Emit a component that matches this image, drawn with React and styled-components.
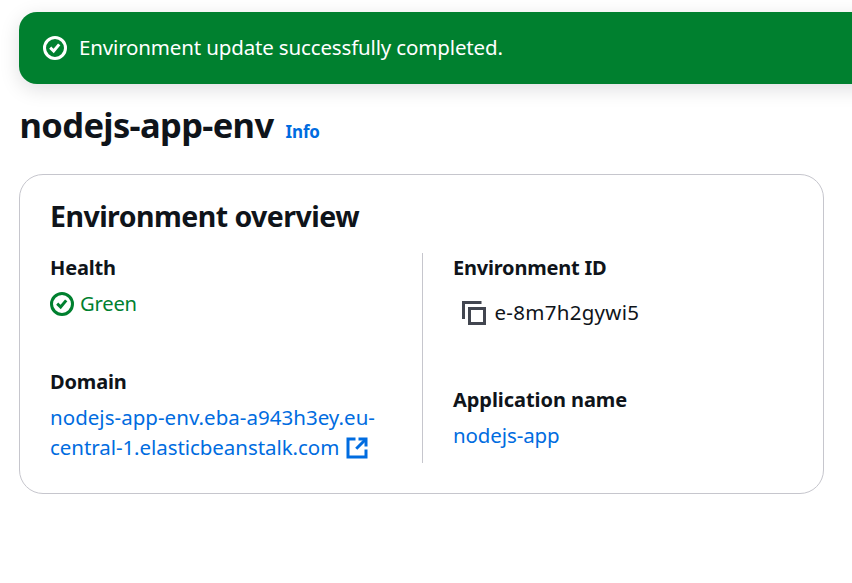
import React from "react";
import styled, { createGlobalStyle } from "styled-components";

const GlobalStyle = createGlobalStyle`
  body {
    margin: 0;
    background: #ffffff;
    color: #0f141a;
    font-family: "Noto Sans", "Open Sans", sans-serif;
    font-size: 20.5px;
    line-height: 30px;
  }
`;

const Page = styled.main`
  box-sizing: border-box;
  height: 583px;
  padding: 12px 0 0 19px;
  overflow: hidden;
`;

const Flash = styled.div`
  box-sizing: border-box;
  display: flex;
  align-items: center;
  gap: 12px;
  width: 900px;
  height: 72px;
  padding: 0 24px;
  border-radius: 18px;
  background: #00802f;
  color: #ffffff;
  box-shadow: 0 5px 20px rgba(0, 7, 22, 0.13);
`;

const FlashText = styled.span`
  padding-bottom: 2px;
  letter-spacing: -0.15px;
`;

const Header = styled.header`
  display: flex;
  align-items: baseline;
  gap: 12px;
  margin: 18px 0 27px 0.6px;
`;

const PageTitle = styled.h1`
  margin: 0;
  font-size: 34.5px;
  line-height: 45px;
  font-weight: 700;
  letter-spacing: -0.66px;
`;

const Link = styled.a`
  color: #006ce0;
  text-decoration: none;
  white-space: nowrap;
  letter-spacing: ${(p) => p.$tracking || "0"};
`;

const LinkLine = styled.span`
  display: block;
  letter-spacing: ${(p) => p.$tracking};
`;

const InfoLink = styled(Link)`
  font-size: 17px;
  font-weight: 700;
`;

const Card = styled.section`
  box-sizing: border-box;
  width: 805px;
  height: 320px;
  padding: 23px 30px 30px;
  border: 1px solid #c6c6cd;
  border-radius: 24px;
`;

const CardTitle = styled.h2`
  margin: 0 0 19px;
  font-size: 28.5px;
  line-height: 36px;
  font-weight: 700;
  letter-spacing: -0.54px;
`;

const Columns = styled.div`
  display: grid;
  grid-template-columns: 372px 1fr;
  height: 210px;
`;

const Column = styled.dl`
  display: flex;
  flex-direction: column;
  gap: 49px;
  margin: 0;

  & + & {
    padding-left: 30px;
    border-left: 1px solid #c6c6cd;
  }
`;

const Pair = styled.div`
  display: flex;
  flex-direction: column;
  gap: 5px;
`;

const Label = styled.dt`
  font-size: 20px;
  font-weight: 700;
  letter-spacing: ${(p) => p.$tracking || "-0.15px"};
`;

const Value = styled.dd`
  margin: 0;
`;

const Status = styled(Value)`
  display: flex;
  gap: 6px;
  color: #00802f;
  font-size: 20.2px;
  letter-spacing: -0.2px;
`;

const CopyValue = styled(Value)`
  display: flex;
  gap: 8.5px;
  padding: 9px;
  letter-spacing: 0.28px;
`;

const Icon = styled.svg`
  flex: none;
  width: 24px;
  height: 24px;
  fill: none;
  stroke: currentColor;
  stroke-width: 2;

  ${Status} &, ${CopyValue} & {
    margin-top: 4px;
  }
`;

const CopyIcon = styled(Icon)`
  color: #424650;
`;

const ExternalSvg = styled(Icon)`
  margin-left: 6px;
  vertical-align: -5px;
`;

const CheckCircle = () => (
  <Icon viewBox="0 0 16 16">
    <circle cx="8" cy="8" r="7" />
    <path d="m4.8 7.8 2.3 2.2 3.7-4.4" />
  </Icon>
);

const Copy = () => (
  <CopyIcon viewBox="0 0 16 16">
    <path d="M15 5H5v10h10V5Z" />
    <path d="M13 1H1v11" />
  </CopyIcon>
);

const External = () => (
  <ExternalSvg viewBox="0 0 16 16">
    <path d="M14 9v5H2V2h5" />
    <path d="M9 2h5v5" />
    <path d="m7.5 8.5 6.5-6.5" />
  </ExternalSvg>
);

export default function App() {
  return (
    <>
      <GlobalStyle />
      <Page>
        <Flash role="status">
          <CheckCircle />
          <FlashText>Environment update successfully completed.</FlashText>
        </Flash>
        <Header>
          <PageTitle>nodejs-app-env</PageTitle>
          <InfoLink $tracking="-0.1px">Info</InfoLink>
        </Header>
        <Card>
          <CardTitle>Environment overview</CardTitle>
          <Columns>
            <Column>
              <Pair>
                <Label>Health</Label>
                <Status>
                  <CheckCircle />
                  Green
                </Status>
              </Pair>
              <Pair>
                <Label>Domain</Label>
                <Value>
                  <Link>
                    <LinkLine $tracking="0.03px">
                      nodejs-app-env.eba-a943h3ey.eu-
                    </LinkLine>
                    <LinkLine $tracking="-0.06px">
                      central-1.elasticbeanstalk.com
                      <External />
                    </LinkLine>
                  </Link>
                </Value>
              </Pair>
            </Column>
            <Column>
              <Pair>
                <Label $tracking="-0.21px">Environment ID</Label>
                <CopyValue>
                  <Copy />
                  e-8m7h2gywi5
                </CopyValue>
              </Pair>
              <Pair>
                <Label $tracking="-0.06px">Application name</Label>
                <Value>
                  <Link $tracking="-0.11px">nodejs-app</Link>
                </Value>
              </Pair>
            </Column>
          </Columns>
        </Card>
      </Page>
    </>
  );
}
